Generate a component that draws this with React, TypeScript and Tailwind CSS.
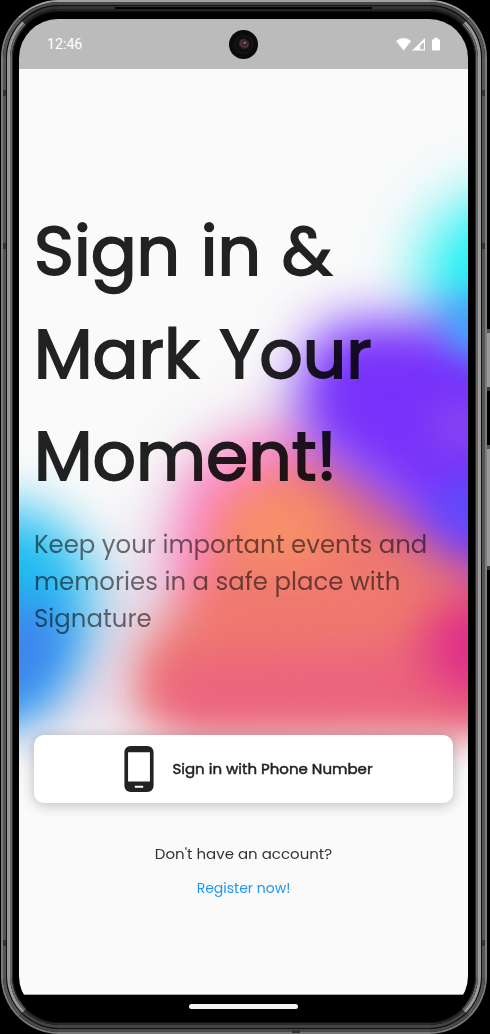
import React from "react";

const heading = ["Sign in &", "Mark Your", "Moment!"];

const copy = ["Keep your important events and", "memories in a safe place with", "Signature"];

function Backdrop() {
  return (
    <svg className="absolute inset-0 h-full w-full" viewBox="19 69 449 926" preserveAspectRatio="none" aria-hidden="true">
      <defs>
        <filter id="b16" x="-100%" y="-100%" width="300%" height="300%" colorInterpolationFilters="sRGB"><feGaussianBlur stdDeviation="18" /></filter>
        <filter id="b22" x="-100%" y="-100%" width="300%" height="300%" colorInterpolationFilters="sRGB"><feGaussianBlur stdDeviation="23" /></filter>
        <filter id="b27" x="-100%" y="-100%" width="300%" height="300%" colorInterpolationFilters="sRGB"><feGaussianBlur stdDeviation="27" /></filter>
        <filter id="b32" x="-100%" y="-100%" width="300%" height="300%" colorInterpolationFilters="sRGB"><feGaussianBlur stdDeviation="32" /></filter>
      </defs>
      <path d="M185 450 L300 380 L470 560 L560 600 L560 725 L-60 735 L30 670 L130 560Z" fill="#cfaad0" opacity="0.42" filter="url(#b32)" />
      <ellipse cx="512" cy="275" rx="90" ry="82" fill="#14f0f4" filter="url(#b32)" />
      <path d="M-60 508 L38 508 L94 560 L84 635 L40 710 L-60 735Z" fill="#1fbcf0" filter="url(#b27)" />
      <path d="M-60 610 L50 600 L76 640 L40 705 L-60 732Z" fill="#3f84ee" filter="url(#b22)" />
      <path d="M190 468 Q240 426 320 430 L420 540 L380 640 L190 620 L168 560Z" fill="#ff86c6" opacity="0.95" filter="url(#b22)" />
      <path d="M242 502 L320 455 L400 490 L560 540 L560 722 L138 720 L144 650 L195 585Z" fill="#f0796f" filter="url(#b22)" />
      <ellipse cx="278" cy="528" rx="58" ry="40" fill="#f7906a" filter="url(#b22)" />
      <path d="M158 660 L560 640 L560 724 L200 732 L158 720Z" fill="#eb637e" filter="url(#b22)" />
      <path d="M330 322 L560 320 L560 612 L468 568 L392 510 L306 440 Q284 372 330 322Z" fill="#7832fa" filter="url(#b27)" />
      <ellipse cx="385" cy="395" rx="50" ry="34" fill="#7832fa" filter="url(#b22)" />
      <ellipse cx="465" cy="428" rx="38" ry="28" fill="#8544f2" filter="url(#b16)" />
      <path d="M446 310 L560 280 L560 368 L455 352Z" fill="#38acfc" filter="url(#b16)" />
      <ellipse cx="472" cy="508" rx="42" ry="28" fill="#5850fc" opacity="0.85" filter="url(#b16)" />
      <ellipse cx="482" cy="646" rx="60" ry="50" fill="#de2f88" filter="url(#b22)" />
    </svg>
  );
}

function StatusIcons() {
  return (
    <svg className="h-[14px] w-[45px]" viewBox="0 0 45 14" fill="#fff" aria-hidden="true">
      <path d="M0.1 3.9Q3.4 0.9 7.6 0.9T15.1 3.9L7.6 13.4Z" />
      <path fillRule="evenodd" d="M29 1V13.4H16ZM27.9 5.2L24.2 8.6V12.3H27.9Z" />
      <path d="M37 2.2H38.4V0.8H41.6V2.2H43Q44 2.2 44 3.2V12.4Q44 13.4 43 13.4H37Q36 13.4 36 12.4V3.2Q36 2.2 37 2.2Z" />
    </svg>
  );
}

function PhoneIcon() {
  return (
    <svg className="size-[50px] shrink-0" viewBox="0 0 24 24" fill="#222" aria-hidden="true">
      <path d="M16 1H8C6.34 1 5 2.34 5 4v16c0 1.66 1.34 3 3 3h8c1.66 0 3-1.34 3-3V4c0-1.66-1.34-3-3-3zm-2 20h-4v-1h4v1zm3.25-3H6.75V4h10.5v14z" />
    </svg>
  );
}

function SideKey({ cls }: { cls: string }) {
  return <div className={"absolute right-0 w-[3px] border-y-[4px] border-t-[#555] border-b-[#3a3a3a] bg-[#999] " + cls} />;
}

function Seam({ cls }: { cls: string }) {
  return <div className={"absolute bg-[#333] " + cls} />;
}

export default function App() {
  return (
    <div className="relative h-[1034px] w-[490px] overflow-hidden bg-black font-['Poppins','Inter',sans-serif]">
      <SideKey cls="top-[329px] h-[62px]" />
      <SideKey cls="top-[445px] h-[125px]" />
      <div className="ml-px h-full w-[486px] rounded-[58px] border-2 border-x-[#7c7c7c] border-t-[#a0a0a0] border-b-[#777]">
        <div className="h-full rounded-[56px] border-[3px] border-x-[#555] border-y-[#484848]">
          <div className="h-full rounded-[53px] border border-[#111]">
            <div className="h-full rounded-[52px] border-[3px] border-x-[#999] border-t-[#333] border-b-[#444]">
              <div className="h-full rounded-[49px] border-2 border-x-[#666] border-t-[#222] border-b-[#2a2a2a]">
                <div className="h-full rounded-[47px] border border-x-[#2a2a2a] border-y-[#111] bg-black py-[7px] pr-[7px] pl-[6px]">
                  <main className="relative isolate flex h-full flex-col overflow-hidden rounded-[39px] bg-black">
                    <header className="flex h-[50px] shrink-0 items-center justify-between bg-[#bbb] pr-[27px] pl-7 text-white">
                      <span className="pt-px font-['Roboto'] text-[14.2px]">12:46</span>
                      <StatusIcons />
                    </header>
                    <section className="relative isolate flex h-[926px] shrink-0 flex-col overflow-hidden border-b border-[#aaa] bg-[#fafafa] px-[15px]">
                      <Backdrop />
                      <h1 className="relative mt-[132px] text-[68px] leading-[102.5px] font-normal [word-spacing:2.5px] text-[#222] mix-blend-multiply [-webkit-text-stroke:1.8px_#222]">
                        {heading.map((line) => (
                          <span key={line} className="block whitespace-nowrap">{line}</span>
                        ))}
                      </h1>
                      <p className="relative mt-[17px] text-[24.4px] leading-[37px] text-black/55">
                        {copy.map((line) => (
                          <span key={line} className="block whitespace-nowrap">{line}</span>
                        ))}
                      </p>
                      <button className="relative mt-[98px] flex h-[68px] w-[419px] shrink-0 items-center justify-center gap-2 rounded-[10px] bg-white text-[15px] text-[#222] shadow-[0_2px_14px_rgba(0,0,0,0.25)]">
                        <PhoneIcon />
                        <span className="pt-px whitespace-nowrap [-webkit-text-stroke:0.5px_#222]">Sign in with Phone Number</span>
                      </button>
                      <div className="relative mt-[33px] flex flex-col items-center text-[15px] leading-[35px] text-[#333]">
                        <span>Don't have an account?</span>
                        <a className="text-[14px] text-[#2196f3]">Register now!</a>
                      </div>
                    </section>
                    <footer className="flex h-[22px] shrink-0 justify-center pt-[9px]">
                      <div className="h-[5px] w-[109px] rounded-full bg-[#f2f2f2]" />
                    </footer>
                  </main>
                </div>
              </div>
            </div>
          </div>
        </div>
      </div>
      <div className="absolute top-[30px] left-[229px] flex size-[29px] items-center justify-center rounded-full bg-[#0b0b0b]">
        <div className="flex size-[19px] items-center justify-center rounded-full border border-[#1c1c1c] bg-[#0e0e0e]">
          <div className="size-[11px] rounded-full bg-[radial-gradient(circle_at_62%_35%,#c58ab0_0,#3b1a33_18%,#4b382c_42%,#171214_65%)]" />
        </div>
      </div>
      <Seam cls="top-[90px] left-[3px] h-[6px] w-[3px]" />
      <Seam cls="top-[243px] left-[3px] h-[6px] w-[3px]" />
      <Seam cls="top-[940px] left-[3px] h-[6px] w-[3px]" />
      <Seam cls="top-[90px] left-[482px] h-[6px] w-[3px]" />
      <Seam cls="top-[243px] left-[482px] h-[6px] w-[3px]" />
      <Seam cls="top-[940px] left-[482px] h-[6px] w-[3px]" />
      <Seam cls="top-[1030px] left-[292px] h-[3px] w-[8px]" />
      <div className="absolute top-[7px] left-[115px] h-[2px] w-[257px] rounded-full bg-black" />
    </div>
  );
}
